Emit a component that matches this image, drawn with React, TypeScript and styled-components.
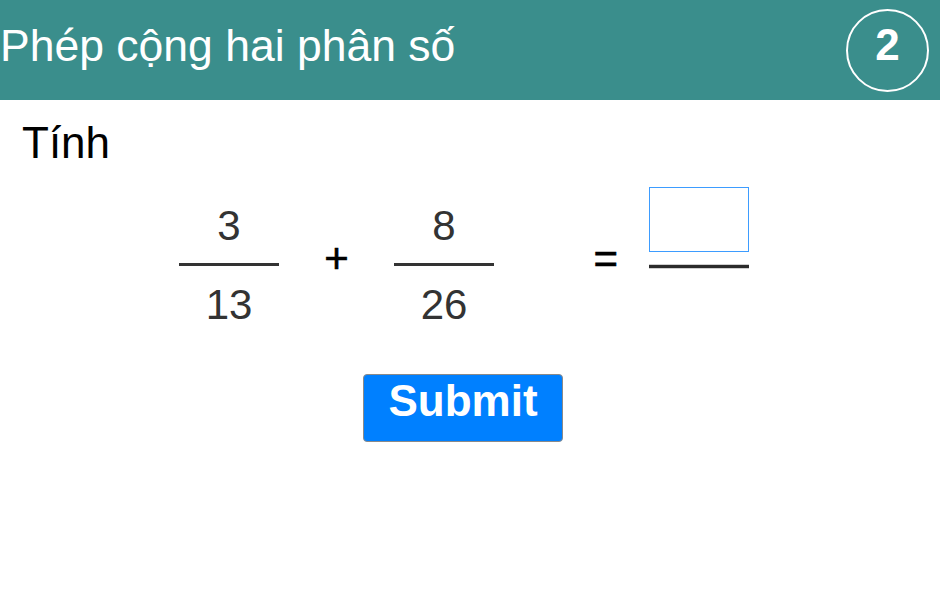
import React from "react";
import styled, { createGlobalStyle } from "styled-components";

const GlobalStyle = createGlobalStyle`
  html, body {
    margin: 0;
    padding: 0;
    background: #ffffff;
    font-family: "Liberation Sans", Arial, sans-serif;
  }
`;

const Page = styled.div`
  width: 940px;
  min-height: 609px;
  background: #ffffff;
`;

const Header = styled.header`
  height: 100px;
  background: #3a8e8c;
  display: flex;
  align-items: center;
  justify-content: space-between;
  padding-right: 11px;
  box-sizing: border-box;
`;

const Title = styled.h1`
  margin: 0;
  padding-bottom: 8px;
  font-size: 44.5px;
  font-weight: normal;
  color: #ffffff;
  line-height: normal;
`;

const Badge = styled.div`
  width: 83px;
  height: 83px;
  border: 2px solid #ffffff;
  border-radius: 50%;
  box-sizing: border-box;
  display: flex;
  align-items: center;
  justify-content: center;
  padding-bottom: 11px;
  color: #ffffff;
  font-size: 44px;
  font-weight: bold;
`;

const Prompt = styled.div`
  margin: 18px 0 0 22px;
  font-size: 44px;
  color: #000000;
  line-height: normal;
`;

const Equation = styled.div`
  margin-top: 19px;
  display: flex;
  align-items: flex-start;
  justify-content: center;
  padding-right: 12px;
`;

const Fraction = styled.div`
  margin-top: 15px;
  width: 100px;
  display: flex;
  flex-direction: column;
  align-items: center;
`;

const Num = styled.div<{ $below?: boolean }>`
  font-size: 42px;
  line-height: 48px;
  color: #333333;
  margin: ${(p) => (p.$below ? "15px 0 0" : "0 0 13px")};
`;

const Bar = styled.div`
  width: 100%;
  height: 3px;
  background: #333333;
`;

const Op = styled.div<{ $width: number; $padRight?: number }>`
  width: ${(p) => p.$width}px;
  margin-top: 48px;
  font-size: 42px;
  line-height: 48px;
  color: #000000;
  box-sizing: border-box;
  text-align: ${(p) => (p.$padRight !== undefined ? "right" : "center")};
  padding-right: ${(p) => p.$padRight ?? 0}px;
  -webkit-text-stroke: 0.6px #000000;
`;

const Answer = styled.div`
  width: 100px;
  display: flex;
  flex-direction: column;
`;

const AnswerBox = styled.input`
  width: 100px;
  height: 65px;
  box-sizing: border-box;
  border: 1px solid #3d9cff;
  outline: none;
  background: #ffffff;
  margin: 0 0 13px;
  padding: 0;
  font-size: 36px;
  text-align: center;
  font-family: "Liberation Sans", Arial, sans-serif;
`;

const AnswerBar = styled.div`
  width: 100%;
  height: 3px;
  background: #2b2b2b;
  border-top: 1px solid #cfcfcf;
  border-bottom: 1px solid #cfcfcf;
  margin-top: -1px;
`;

const Actions = styled.div`
  margin-top: 45px;
  display: flex;
  justify-content: center;
  padding-right: 14px;
`;

const SubmitBtn = styled.button`
  width: 200px;
  height: 68px;
  box-sizing: border-box;
  padding: 1px 0 0;
  background: #0080ff;
  border: 1px solid #8a8a8a;
  border-radius: 4px;
  color: #ffffff;
  font-family: "Liberation Sans", Arial, sans-serif;
  font-size: 44px;
  font-weight: bold;
  line-height: 50px;
  display: flex;
  justify-content: center;
  align-items: flex-start;
  cursor: pointer;
`;

const App: React.FC = () => {
  return (
    <Page>
      <GlobalStyle />
      <Header>
        <Title>Phép cộng hai phân số</Title>
        <Badge>2</Badge>
      </Header>
      <Prompt>Tính</Prompt>
      <Equation>
        <Fraction>
          <Num>3</Num>
          <Bar />
          <Num $below>13</Num>
        </Fraction>
        <Op $width={115}>+</Op>
        <Fraction>
          <Num>8</Num>
          <Bar />
          <Num $below>26</Num>
        </Fraction>
        <Op $width={155} $padRight={31}>=</Op>
        <Answer>
          <AnswerBox type="text" />
          <AnswerBar />
        </Answer>
      </Equation>
      <Actions>
        <SubmitBtn type="button">Submit</SubmitBtn>
      </Actions>
    </Page>
  );
};

export default App;
